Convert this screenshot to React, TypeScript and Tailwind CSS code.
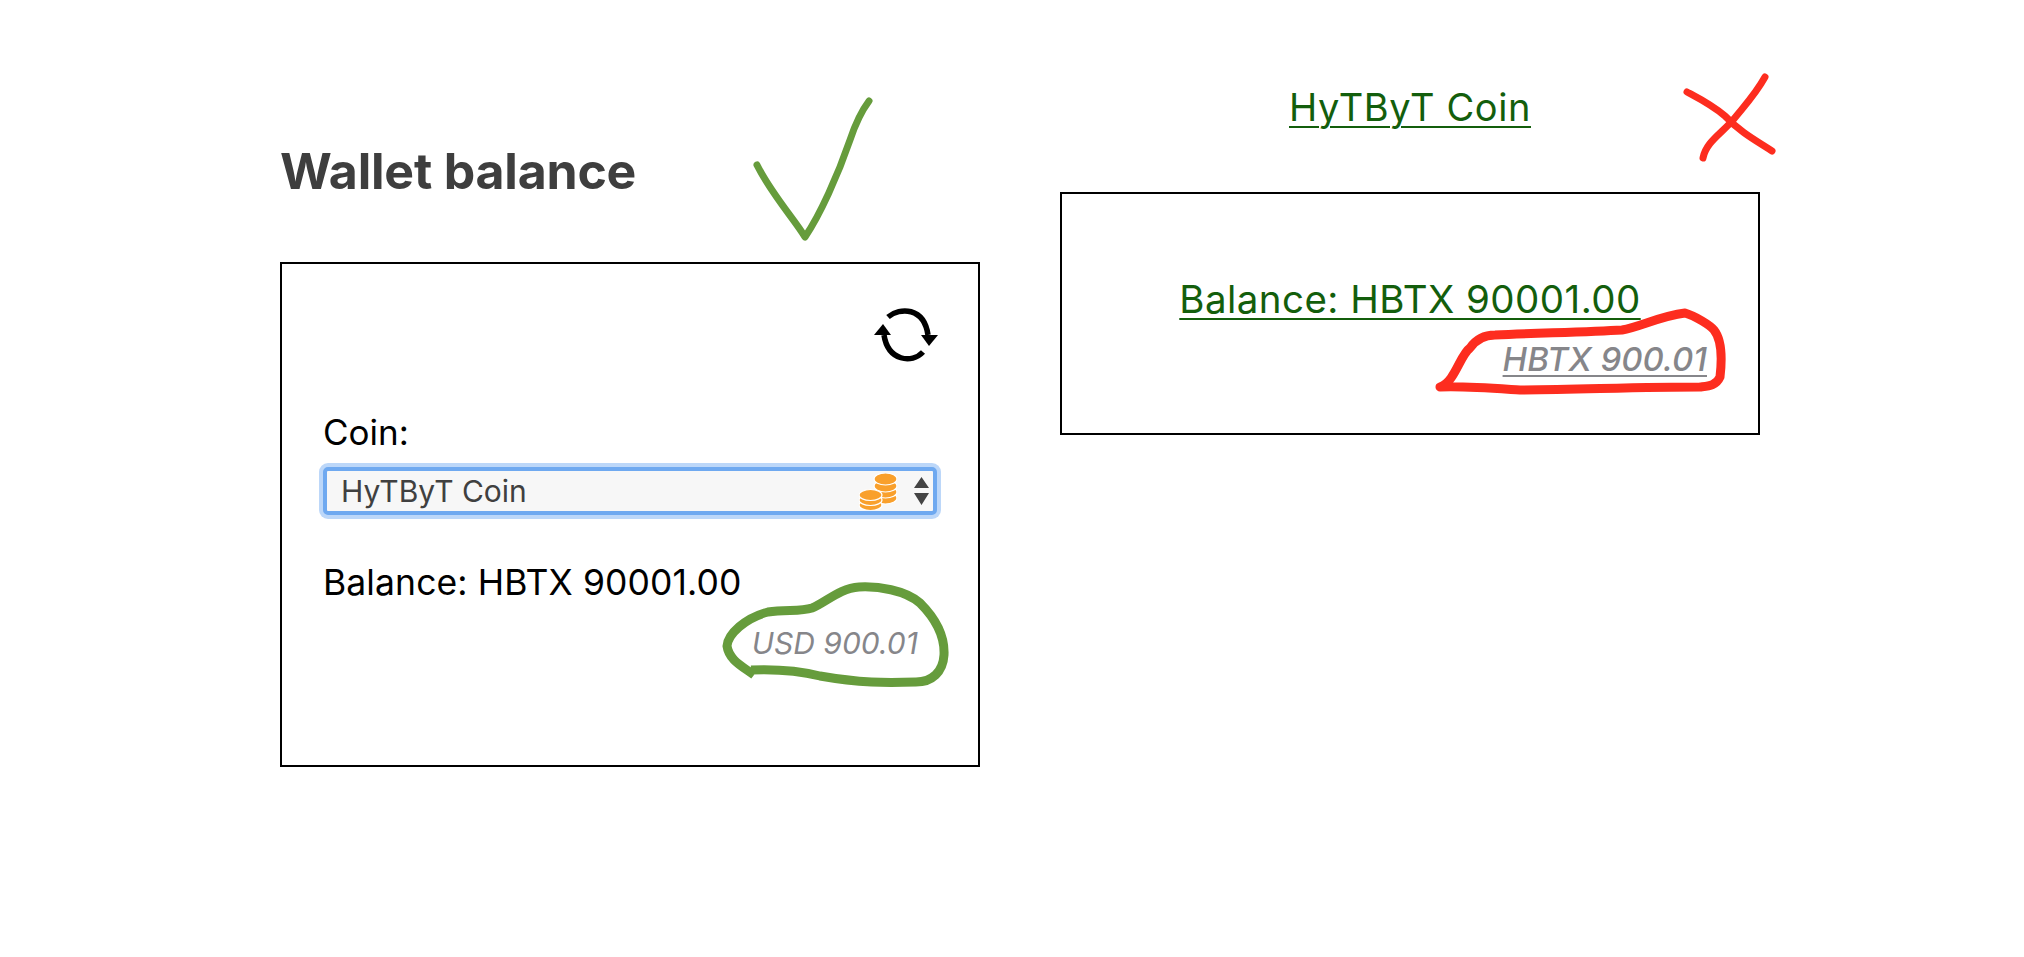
export default function App() {
  return (
    <div className="relative min-h-screen bg-white overflow-hidden">
      <div className="flex gap-[80px] pl-[280px] font-['Inter',sans-serif]">
        <WalletPanel />
        <CoinPanel />
      </div>
      <Scribbles />
    </div>
  );
}

function WalletPanel() {
  return (
    <div className="w-[700px] pt-[141px]">
      <h1 className="text-[50px] leading-[60px] font-bold text-[#3e3e3e] tracking-[-0.2px] mb-[61px]">Wallet balance</h1>
      <div className="h-[505px] border-2 border-black px-[41px] pt-[43px]">
        <div className="flex justify-end -mr-[2px]">
          <RefreshIcon />
        </div>
        <div className="text-[35px] leading-[40px] text-black mt-[49px]">Coin:</div>
        <div className="mt-[15px] h-[48px] flex items-center justify-between rounded-[5px] border-[4px] border-[#6fa9f0] bg-[#f7f7f7] pl-[14px] pr-[4px] shadow-[0_0_0_4px_#bcd7f9]">
          <span className="text-[30px] leading-none text-[#404040]">HyTByT Coin</span>
          <div className="flex items-center gap-[17px]">
            <CoinsIcon />
            <svg className="w-[15px] h-[28px]" viewBox="0 0 15 28">
              <path d="M7.5 0 15 11H0Z M0 16h15L7.5 28Z" fill="#444" />
            </svg>
          </div>
        </div>
        <div className="text-[35.5px] leading-[40px] text-black tracking-[0.1px] mt-[48px]">Balance: HBTX 90001.00</div>
        <div className="text-right pr-[19px] italic text-[30px] leading-[36px] text-[#86868a] mt-[22px]">USD 900.01</div>
      </div>
    </div>
  );
}

function CoinPanel() {
  return (
    <div className="w-[700px] pt-[85px]">
      <div className="text-center text-[38px] leading-[44px] text-[#135e0c] tracking-[0.6px] underline underline-offset-[5px] decoration-2 mb-[63px]">
        HyTByT Coin
      </div>
      <div className="h-[243px] border-2 border-black px-[40px] pt-[83px]">
        <div className="text-center text-[38.5px] leading-[44px] text-[#135e0c] tracking-[0.45px] underline underline-offset-[5px] decoration-2">
          Balance: HBTX 90001.00
        </div>
        <div className="text-right italic font-medium text-[33px] leading-[40px] text-[#86868a] underline underline-offset-[4px] decoration-2 mt-[18px] pr-[11px]">
          HBTX 900.01
        </div>
      </div>
    </div>
  );
}

function RefreshIcon() {
  return (
    <svg className="w-[66px] h-[56px]" viewBox="873 308 66 56" fill="none">
      <path d="M888 318C900 308 924 308 928 336" stroke="#000" strokeWidth="5.5" />
      <path d="M921 336h17l-9 11Z" fill="#000" />
      <path d="M923 353C912 365 888 362 884 336" stroke="#000" strokeWidth="5.5" />
      <path d="M874 336h17l-8-11Z" fill="#000" />
    </svg>
  );
}

function CoinsIcon() {
  const back = [497, 491, 485, 478];
  const front = [504, 499, 494];
  return (
    <svg className="w-[38px] h-[37px]" viewBox="858 472 38 37">
      {back.map((cy) => (
        <ellipse key={cy} cx="884.5" cy={cy} rx="11.5" ry="6" fill="#f9a02c" stroke="#fff" strokeWidth="1.2" />
      ))}
      {front.map((cy) => (
        <ellipse key={cy} cx="869.5" cy={cy} rx="11.5" ry="5.5" fill="#f9a02c" stroke="#fff" strokeWidth="1.2" />
      ))}
    </svg>
  );
}

// hand drawn marks on top of the two panels
function Scribbles() {
  return (
    <>
      <svg className="absolute left-[745px] top-[90px] w-[135px] h-[160px]" viewBox="745 90 135 160" fill="none">
        <path d="M869 101C860 113 855 125 850 140C838 175 820 215 805 237C795 220 772 195 757 165" stroke="#669c3c" strokeWidth="7" strokeLinecap="round" strokeLinejoin="round" />
      </svg>
      <svg className="absolute left-[715px] top-[580px] w-[240px] h-[110px]" viewBox="715 580 240 110" fill="none">
        <path d="M754 675C742 666 729 660 727 646C728 634 745 618 768 612C785 609 800 612 812 608C825 603 840 588 859 587C878 586 905 590 920 603C934 617 945 635 944 655C943 672 932 682 916 682C885 683 860 683 820 676C800 671 775 669 751 670" stroke="#669c3c" strokeWidth="9" strokeLinejoin="round" />
      </svg>
      <svg className="absolute left-[1680px] top-[70px] w-[100px] h-[95px]" viewBox="1680 70 100 95" fill="none">
        <path d="M1765 77C1755 95 1745 105 1733 120C1722 133 1706 142 1703 158" stroke="#fd2d1f" strokeWidth="7" strokeLinecap="round" />
        <path d="M1687 92C1702 100 1712 105 1725 116C1740 132 1755 140 1772 151" stroke="#fd2d1f" strokeWidth="7" strokeLinecap="round" />
      </svg>
      <svg className="absolute left-[1430px] top-[305px] w-[300px] h-[95px]" viewBox="1430 305 300 95" fill="none">
        <path d="M1440 387C1455 382 1460 355 1470 348C1477 338 1485 335 1495 335C1540 333 1590 332 1622 330C1640 327 1660 316 1685 313C1695 316 1710 325 1714 330C1722 340 1722 360 1720 377C1716 386 1708 386 1700 387C1650 387 1590 389 1520 390C1490 388 1465 386 1440 387Z" stroke="#fd2d1f" strokeWidth="9" strokeLinejoin="round" />
      </svg>
    </>
  );
}
